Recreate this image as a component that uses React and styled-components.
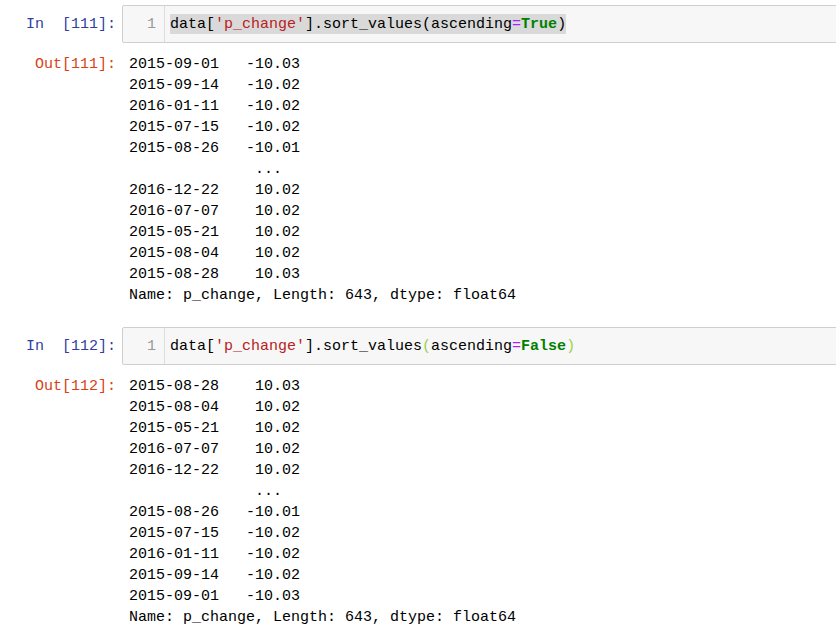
import React from "react";
import styled, { createGlobalStyle } from "styled-components";

const Global = createGlobalStyle`
  html, body { margin: 0; padding: 0; background: #fff; overflow: hidden; }
  body { font-family: "Liberation Mono", "DejaVu Sans Mono", monospace; font-size: 15px; }
`;

const Notebook = styled.div`
  width: 836px;
  padding-top: 5px;
  display: flex;
  flex-direction: column;
`;

const Cell = styled.div`
  display: flex;
  flex-direction: column;
  margin-bottom: ${(p) => p.$gap || 0}px;
`;

const Row = styled.div`
  display: flex;
  align-items: flex-start;
`;

const Prompt = styled.div`
  width: 116px;
  flex: none;
  text-align: right;
  white-space: pre;
  padding-top: ${(p) => (p.$out ? 0 : 10)}px;
  line-height: ${(p) => (p.$out ? 21 : 20)}px;
  color: ${(p) => (p.$out ? "#D84315" : "#303F9F")};
`;

const InputBox = styled.div`
  flex: 1;
  margin-left: 6px;
  margin-right: -8px;
  display: flex;
  border: 1px solid #cfcfcf;
  border-radius: 2px;
  background: #f7f7f7;
`;

const Gutter = styled.div`
  width: 33px;
  padding: 9px 8px 7px 0;
  border-right: 1px solid #dddddd;
  text-align: right;
  line-height: 20px;
  color: #999999;
`;

const Code = styled.div`
  padding: 8px 0 8px 5px;
  display: flex;
  color: #000;
  white-space: pre;
`;

const Line = styled.div`
  background: ${(p) => (p.$selected ? "#d9d9d9" : "transparent")};
  padding-top: 1px;
  height: 19px;
  line-height: 20px;
`;

const Str = styled.span`color: #ba2121;`;
const Op = styled.span`color: #aa22ff;`;
const Kw = styled.span`color: #008000; font-weight: bold;`;
const Bracket = styled.span`color: ${(p) => (p.$match ? "#9fcf4a" : "inherit")};`;

const Output = styled.pre`
  margin: 0;
  padding-left: 13px;
  font-family: inherit;
  font-size: 15px;
  line-height: 21px;
  color: #000;
`;

const OutRow = styled(Row)`
  margin-top: 11px;
`;

const neg = [
  ["2015-09-01", "-10.03"],
  ["2015-09-14", "-10.02"],
  ["2016-01-11", "-10.02"],
  ["2015-07-15", "-10.02"],
  ["2015-08-26", "-10.01"],
];
const pos = [
  ["2016-12-22", "10.02"],
  ["2016-07-07", "10.02"],
  ["2015-05-21", "10.02"],
  ["2015-08-04", "10.02"],
  ["2015-08-28", "10.03"],
];

const fmt = ([d, v]) => d + " ".repeat(19 - 10 - v.length) + v;
const tail = "Name: p_change, Length: 643, dtype: float64";
const dots = " ".repeat(14) + "...";

const out1 = [...neg.map(fmt), dots, ...pos.map(fmt), tail].join("\n");
const out2 = [
  ...[...pos].reverse().map(fmt),
  dots,
  ...[...neg].reverse().map(fmt),
  tail,
].join("\n");

function NotebookCell({ n, value, selected, match, out, gap }) {
  return (
    <Cell $gap={gap}>
      <Row>
        <Prompt>{`In  [${n}]:`}</Prompt>
        <InputBox>
          <Gutter>1</Gutter>
          <Code>
            <Line $selected={selected}>
              data[<Str>'p_change'</Str>].sort_values
              <Bracket $match={match}>(</Bracket>ascending<Op>=</Op>
              <Kw>{value}</Kw>
              <Bracket $match={match}>)</Bracket>
            </Line>
          </Code>
        </InputBox>
      </Row>
      <OutRow>
        <Prompt $out>{`Out[${n}]:`}</Prompt>
        <Output>{out}</Output>
      </OutRow>
    </Cell>
  );
}

export default function App() {
  return (
    <>
      <Global />
      <Notebook>
        <NotebookCell n={111} value="True" selected out={out1} gap={21} />
        <NotebookCell n={112} value="False" match out={out2} />
      </Notebook>
    </>
  );
}
